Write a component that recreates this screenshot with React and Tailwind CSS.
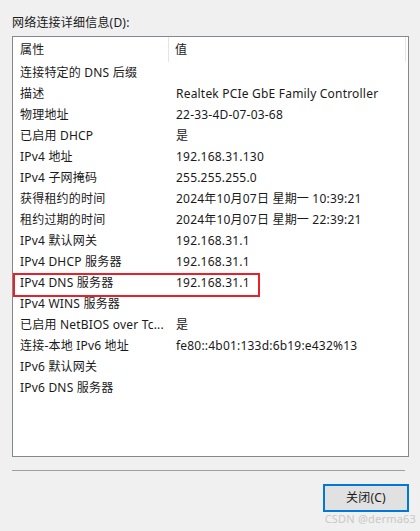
const rows = [
  ['连接特定的 DNS 后缀', ''],
  ['描述', 'Realtek PCIe GbE Family Controller'],
  ['物理地址', '22-33-4D-07-03-68'],
  ['已启用 DHCP', '是'],
  ['IPv4 地址', '192.168.31.130'],
  ['IPv4 子网掩码', '255.255.255.0'],
  ['获得租约的时间', '2024年10月07日 星期一 10:39:21'],
  ['租约过期的时间', '2024年10月07日 星期一 22:39:21'],
  ['IPv4 默认网关', '192.168.31.1'],
  ['IPv4 DHCP 服务器', '192.168.31.1'],
  ['IPv4 DNS 服务器', '192.168.31.1', true],
  ['IPv4 WINS 服务器', ''],
  ['已启用 NetBIOS over Tc...', '是'],
  ['连接-本地 IPv6 地址', 'fe80::4b01:133d:6b19:e432%13'],
  ['IPv6 默认网关', ''],
  ['IPv6 DNS 服务器', ''],
]

export default function App() {
  return (
    <div
      className="relative h-[531px] w-[420px] overflow-hidden bg-[#f0f0f0] text-[12px] tracking-[0.2px] text-[#1a1a1a]"
      style={{ fontFamily: '"Noto Sans", "Noto Sans CJK SC", sans-serif' }}
    >
      <div className="px-3 pt-[14px]">
        <p className="h-[17px] leading-[17px]">网络连接详细信息(D):</p>

        <div className="mt-[5px] h-[421px] w-[397px] border border-[#828790] bg-white">
          <div className="flex h-[25px] items-center">
            <div className="flex h-full w-[156px] items-center border-r border-[#e5e5e5] pl-[7px]">属性</div>
            <div className="flex h-full w-[237px] items-center border-r border-[#e5e5e5] pl-[6px]">值</div>
          </div>

          {rows.map(([name, value, marked]) => (
            <div key={name} className="relative flex h-[21px] items-center">
              <div className="w-[156px] truncate pl-[7px]">{name}</div>
              <div className="pl-[7px] whitespace-nowrap">{value}</div>
              {marked && (
                <span className="pointer-events-none absolute left-0 top-[1px] h-[24px] w-[247px] border-2 border-[#e8202a]" />
              )}
            </div>
          ))}
        </div>

        <div className="mt-[13px] h-px w-[393px] bg-[#a0a0a0]" />

        <div className="mt-[13px] flex justify-end">
          <button className="mr-[-1px] h-[28px] w-[86px] border-2 border-[#0078d7] bg-[#e1e1e1] text-[12px] text-[#1a1a1a]">
            关闭(C)
          </button>
        </div>
      </div>

      <p className="absolute bottom-[4px] right-[4px] text-[11px] text-[#c8c8c8]">CSDN @derma63</p>
    </div>
  )
}
